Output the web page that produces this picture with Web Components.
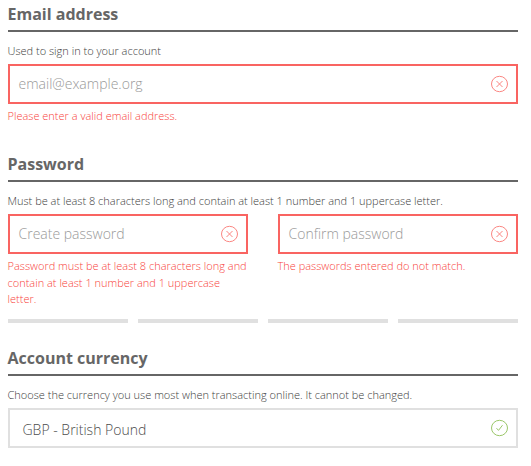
<!DOCTYPE html>
<html lang="en">
<head>
<meta charset="utf-8">
<title>Create account</title>
<style>
	body{
		margin: 0;
		background: #fff;
		color: #666;
		font-family: "Open Sans", "Noto Sans", sans-serif;
	}
</style>
</head>
<body>

<sign-up-form></sign-up-form>

<script>
(function(d){

	function createTemplate(html){
		const template = d.createElement('template');
		template.innerHTML = html;
		return template;
	}

	class BaseComponent extends HTMLElement{
		constructor(){
			super();
			this.attachShadow({ mode: 'open' });
			this.shadowRoot.appendChild(this.constructor.template.content.cloneNode(true));
		}
	}


	//////////////////////
	// status icon: error (cross) or valid (tick)

	class StatusIcon extends BaseComponent{}

	StatusIcon.template = createTemplate(`
	<style>
		:host{
			display: block;
			flex: none;
			width: 18px;
			height: 18px;
			color: #fb8783;
		}
		:host([status="valid"]){
			color: #9bc76a;
		}
		svg{
			display: block;
			fill: none;
			stroke: currentColor;
			stroke-width: 1;
		}
		.tick, :host([status="valid"]) .cross{
			display: none;
		}
		:host([status="valid"]) .tick{
			display: inline;
		}
	</style>
	<svg width="18" height="18" viewBox="0 0 18 18">
		<ellipse cx="9.5" cy="9" rx="8" ry="7.7"></ellipse>
		<path class="cross" d="M6.5 6l6 6M12.5 6l-6 6"></path>
		<path class="tick" d="M6.5 9.2l2 2.2 4-5.2"></path>
	</svg>
	`);


	//////////////////////
	// bordered field with its status and its message

	class FormField extends BaseComponent{
		connectedCallback(){
			this.shadowRoot.querySelector('status-icon').setAttribute('status', this.getAttribute('status'));
		}
	}

	FormField.template = createTemplate(`
	<style>
		:host{
			display: block;
			flex: 1 1 0;
			min-width: 0;
			color: #f96461;
		}
		.box{
			display: flex;
			align-items: center;
			justify-content: space-between;
			box-sizing: border-box;
			height: 40px;
			padding: 0 8px 0 8.5px;
			border: 2px solid #f96461;
			color: #999;
			font-size: 14px;
			font-weight: 300;
			line-height: 20px;
		}
		:host([status="valid"]) .box{
			padding-left: 12.5px;
			border-color: #e0e0e0;
			color: #4c4c4c;
		}
		:host([status="valid"]) .value{
			padding-top: 4px;
		}
		.message{
			margin-left: -0.5px;
			padding-top: 4px;
			color: #f83f3c;
			font-size: 11px;
			font-weight: 300;
			line-height: 16.5px;
		}
	</style>
	<div class="box">
		<div class="value"><slot></slot></div>
		<status-icon></status-icon>
	</div>
	<div class="message"><slot name="message"></slot></div>
	`);


	//////////////////////
	// password strength

	class StrengthMeter extends BaseComponent{}

	StrengthMeter.template = createTemplate(`
	<style>
		:host{
			display: flex;
			gap: 10px;
			height: 4px;
		}
		div{
			flex: 1;
			background: #e0e0e0;
		}
	</style>
	<div></div><div></div><div></div><div></div>
	`);


	//////////////////////
	// titled section

	class FormSection extends BaseComponent{}

	FormSection.template = createTemplate(`
	<style>
		:host{
			display: block;
		}
		h2{
			box-sizing: border-box;
			height: 32px;
			margin: 0;
			padding-top: 3px;
			border-bottom: 2px solid #666;
			font-size: 16px;
			font-weight: 700;
			line-height: 22px;
			text-indent: -0.5px;
		}
		p{
			box-sizing: border-box;
			height: 32px;
			margin: 0 0 0 -0.5px;
			padding-top: 11px;
			color: #3c3c3c;
			font-size: 11px;
			font-weight: 300;
			line-height: 16px;
			white-space: nowrap;
		}
		.fields{
			display: flex;
			gap: 30px;
		}
	</style>
	<h2><slot name="title"></slot></h2>
	<p><slot name="help"></slot></p>
	<div class="fields"><slot></slot></div>
	<slot name="footer"></slot>
	`);


	//////////////////////
	// whole form

	class SignUpForm extends BaseComponent{}

	SignUpForm.template = createTemplate(`
	<style>
		:host{
			display: block;
			width: 510px;
			padding: 0 8px;
		}
		.email{
			height: 150px;
		}
		.password{
			height: 194px;
		}
		strength-meter{
			margin-top: 11px;
		}
	</style>
	<form-section class="email">
		<span slot="title">Email address</span>
		<span slot="help">Used to sign in to your account</span>
		<form-field status="error">email@example.org<span slot="message">Please enter a valid email address.</span></form-field>
	</form-section>
	<form-section class="password">
		<span slot="title">Password</span>
		<span slot="help">Must be at least 8 characters long and contain at least 1 number and 1 uppercase letter.</span>
		<form-field status="error">Create password<span slot="message">Password must be at least 8 characters long and contain at least 1 number and 1 uppercase letter.</span></form-field>
		<form-field status="error">Confirm password<span slot="message">The passwords entered do not match.</span></form-field>
		<strength-meter slot="footer"></strength-meter>
	</form-section>
	<form-section>
		<span slot="title">Account currency</span>
		<span slot="help">Choose the currency you use most when transacting online. It cannot be changed.</span>
		<form-field status="valid">GBP - British Pound</form-field>
	</form-section>
	`);


	window.customElements.define('status-icon', StatusIcon);
	window.customElements.define('form-field', FormField);
	window.customElements.define('strength-meter', StrengthMeter);
	window.customElements.define('form-section', FormSection);
	window.customElements.define('sign-up-form', SignUpForm);

})(document);
</script>
</body>
</html>
